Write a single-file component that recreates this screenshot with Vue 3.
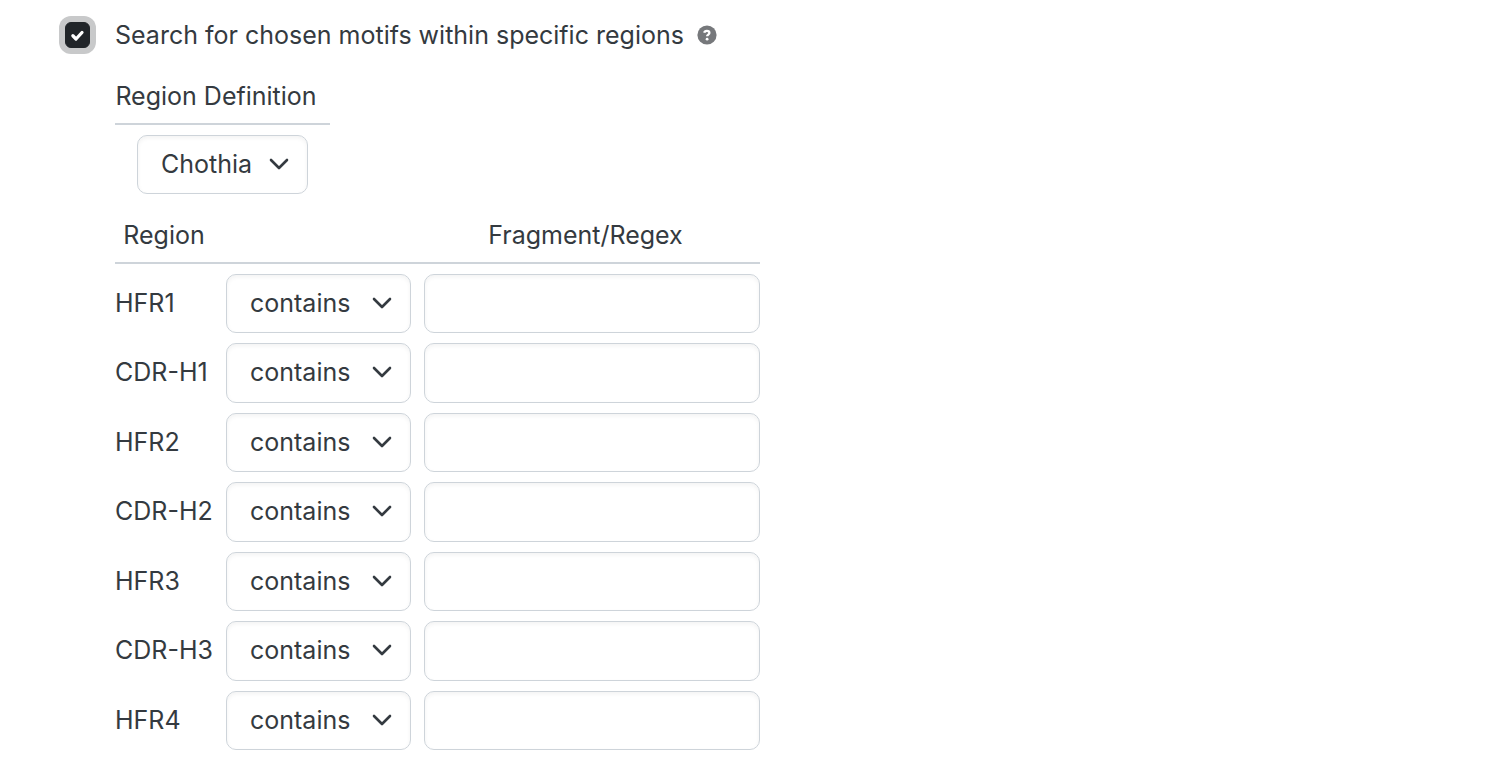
<script setup>
import { ref, reactive } from 'vue'

const enabled = ref(true)
const definition = ref('Chothia')
const definitions = ['Chothia', 'IMGT', 'Kabat']
const operators = ['contains', 'equals']
const rows = reactive(
  ['HFR1', 'CDR-H1', 'HFR2', 'CDR-H2', 'HFR3', 'CDR-H3', 'HFR4'].map((name) => ({
    name,
    operator: 'contains',
    pattern: ''
  }))
)
</script>

<template>
  <form class="motifs" @submit.prevent>
    <div class="toggle">
      <span class="check">
        <input id="use-regions" v-model="enabled" type="checkbox" />
        <svg v-if="enabled" viewBox="0 0 20 20" aria-hidden="true">
          <path d="M6.3 10.6l2.5 2.6 4.8-5.2" />
        </svg>
      </span>
      <label for="use-regions">Search for chosen motifs within specific regions</label>
      <button class="help" type="button" aria-label="Help">
        <svg viewBox="0 0 20 20" aria-hidden="true">
          <circle cx="10" cy="10" r="9.6" />
          <path d="M7.3 7.8c.2-1.2 1.2-1.9 2.6-1.9 1.5 0 2.5.8 2.5 2 0 1.6-2.3 1.7-2.3 3.4" />
          <circle class="dot" cx="10.1" cy="14.2" r="1.4" />
        </svg>
      </button>
    </div>

    <div v-if="enabled" class="body">
      <table class="definition">
        <thead>
          <tr><th scope="col"><label for="definition">Region Definition</label></th></tr>
        </thead>
        <tbody>
          <tr>
            <td>
              <span class="picker">
                <select id="definition" v-model="definition">
                  <option v-for="d in definitions" :key="d">{{ d }}</option>
                </select>
                <svg viewBox="0 0 22 14" aria-hidden="true"><path d="M3 2l8 8 8-8" /></svg>
              </span>
            </td>
          </tr>
        </tbody>
      </table>

      <table class="regions">
        <thead>
          <tr>
            <th scope="col">Region</th>
            <td></td>
            <th scope="col">Fragment/Regex</th>
          </tr>
        </thead>
        <tbody>
          <tr v-for="row in rows" :key="row.name">
            <th scope="row"><label :for="`pattern-${row.name}`">{{ row.name }}</label></th>
            <td class="operator">
              <span class="picker">
                <select v-model="row.operator" :aria-label="`${row.name} operator`">
                  <option v-for="o in operators" :key="o">{{ o }}</option>
                </select>
                <svg viewBox="0 0 22 14" aria-hidden="true"><path d="M3 2l8 8 8-8" /></svg>
              </span>
            </td>
            <td><input :id="`pattern-${row.name}`" v-model="row.pattern" class="pattern" type="text" /></td>
          </tr>
        </tbody>
      </table>
    </div>
  </form>
</template>

<style>
body {
  background: #fff;
}
</style>

<style scoped>
.motifs {
  --control: 59px;
  padding: 15px 24px 16px 65px;
  font: 400 25px/40px Inter, sans-serif;
  color: #343a40;
}

.toggle {
  display: flex;
  align-items: center;
}

.check {
  display: grid;
  width: 25px;
  height: 26px;
  margin-right: 25px;
}

.check > * {
  grid-area: 1 / 1;
  width: 25px;
  height: 26px;
  margin: 0;
}

.check input {
  appearance: none;
  border: 1px solid #adb5bd;
  border-radius: 6px;
  background: #fff;
}

.check input:checked {
  border-color: #212529;
  background: #212529;
  box-shadow: 0 0 0 6px #c8c9ca;
}

.check svg {
  pointer-events: none;
  fill: none;
  stroke: #fff;
  stroke-width: 2.6;
  stroke-linecap: round;
  stroke-linejoin: round;
}

.help {
  display: flex;
  margin-left: 13px;
  padding: 0;
  border: 0;
  background: none;
}

.help svg {
  width: 20px;
  height: 20px;
  fill: #76787b;
}

.help path {
  fill: none;
  stroke: #fff;
  stroke-width: 2.3;
}

.help .dot {
  fill: #fff;
}

.body {
  padding-left: 50px;
}

table {
  border-collapse: separate;
  border-spacing: 0;
}

th,
td {
  padding: 0;
  font-weight: 400;
  text-align: center;
}

thead th,
thead td {
  padding: 0 13px 7px 0;
  border-bottom: 2px solid #ced4da;
}

.definition {
  min-width: 215px;
  margin-top: 21px;
}

.regions {
  margin-top: 21px;
}

.regions th:first-child {
  min-width: 98px;
}

tbody th,
tbody td {
  padding-top: 10px;
}

tbody th {
  padding-right: 13px;
  padding-bottom: 2px;
  text-align: left;
}

.operator {
  padding-right: 13px;
}

tbody tr:nth-child(even) {
  --control: 60px;
}

.picker {
  display: grid;
  align-items: center;
}

.definition .picker {
  display: inline-grid;
  vertical-align: top;
}

.picker > * {
  grid-area: 1 / 1;
}

.picker svg {
  justify-self: end;
  width: 22px;
  height: 14px;
  margin-right: 18px;
  pointer-events: none;
  fill: none;
  stroke: #343a40;
  stroke-width: 2.6;
  stroke-linecap: round;
  stroke-linejoin: round;
}

select,
.pattern {
  display: block;
  box-sizing: border-box;
  height: var(--control);
  margin: 0;
  border: 1px solid #ced4da;
  border-radius: 10px;
  background: #fff;
  box-shadow: inset 0 2px 4px rgba(0, 0, 0, 0.05);
  font: inherit;
  color: inherit;
}

select {
  appearance: none;
  padding: 0 54px 2px 23px;
}

.operator select {
  width: 185px;
}

.pattern {
  width: 336px;
  padding: 0 23px;
}
</style>
